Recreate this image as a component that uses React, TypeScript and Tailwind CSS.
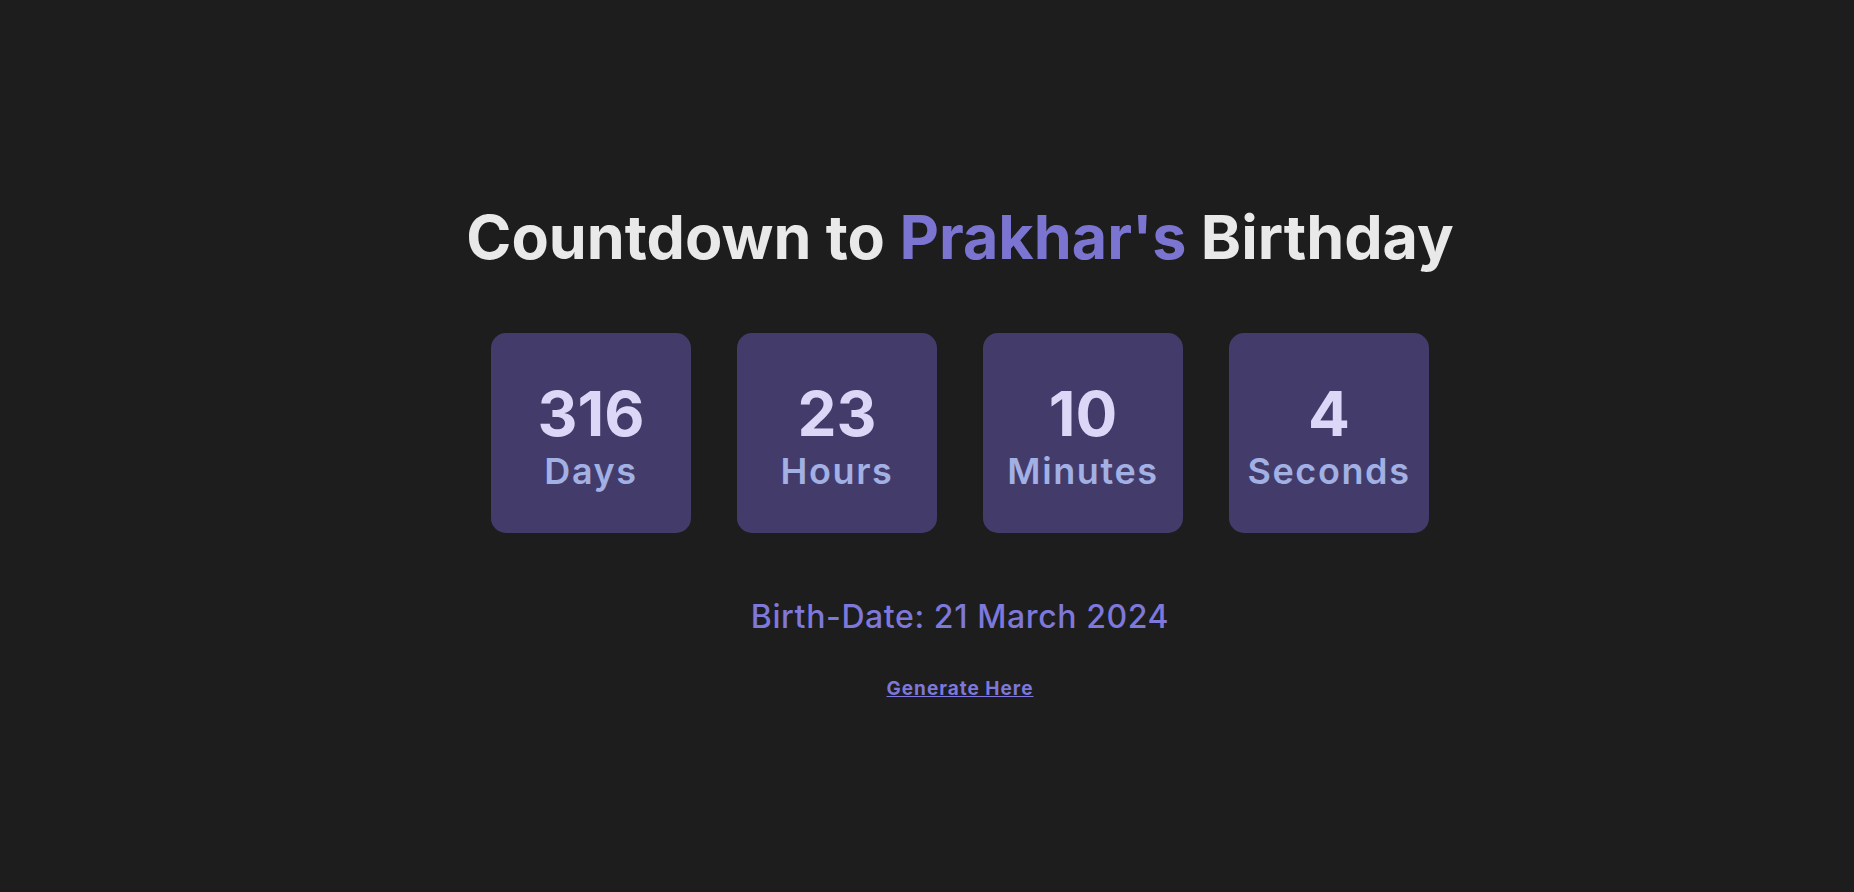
import React from "react";

interface UnitProps {
  value: number;
  label: string;
}

const Unit: React.FC<UnitProps> = ({ value, label }) => {
  return (
    <div className="w-[200px] h-[200px] rounded-[15px] bg-[#433c6b] flex flex-col items-center justify-center pt-[12px]">
      <p className="text-[62px] leading-none font-bold text-[#ddd7f7] mt-[-6px]">{value}</p>
      <p className="text-[36px] leading-none font-semibold tracking-[1.6px] text-[#a2b0e4] mt-[8px]">
        {label}
      </p>
    </div>
  );
};

const App: React.FC = () => {
  const units = [
    { value: 316, label: "Days" },
    { value: 23, label: "Hours" },
    { value: 10, label: "Minutes" },
    { value: 4, label: "Seconds" },
  ];

  return (
    <div
      className="h-[892px] overflow-hidden w-full bg-[#1d1d1d] pl-[66px] pt-[199px] flex flex-col items-center"
      style={{ fontFamily: "Inter, 'Noto Sans', sans-serif" }}
    >
      <h1 className="text-[61px] leading-[76px] font-bold text-[#e9e9e9]">
        Countdown to <span className="text-[#7b75d1]">Prakhar's</span> Birthday
      </h1>
      <div className="flex gap-[46px] mt-[58px]">
        {units.map((u) => (
          <Unit key={u.label} value={u.value} label={u.label} />
        ))}
      </div>
      <p className="mt-[60px] text-[32px] tracking-[0.6px] font-medium text-[#7d78d9]">
        Birth-Date: 21 March 2024
      </p>
      <a href="#" className="mt-[34px] text-[19px] tracking-[1px] font-bold text-[#7d78d9] underline">
        Generate Here
      </a>
    </div>
  );
};

export default App;
